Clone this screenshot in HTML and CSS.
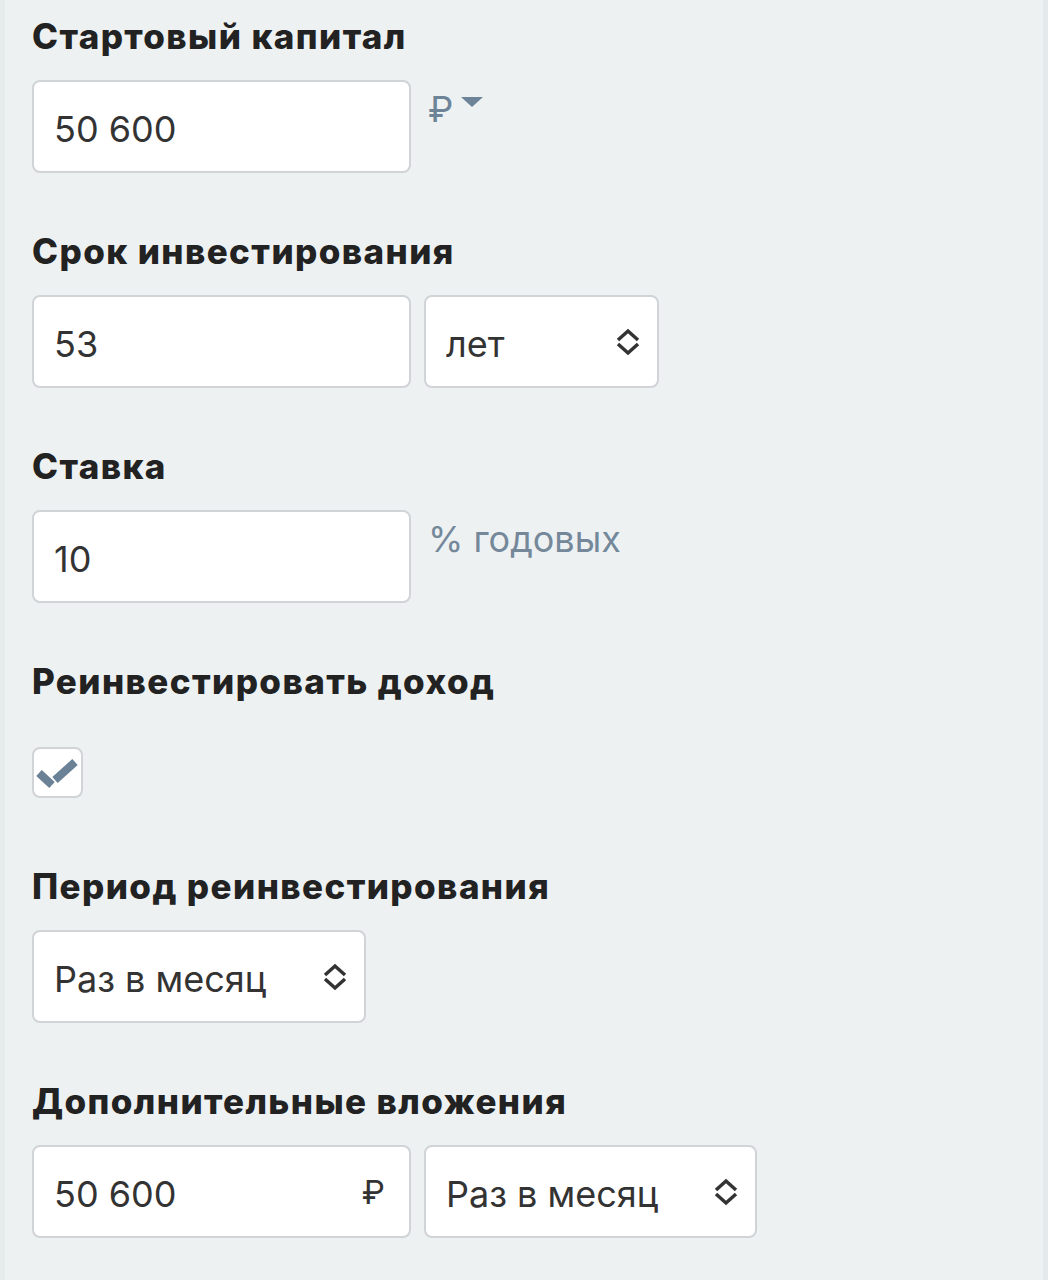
FILE: index.html
```html
<!DOCTYPE html>
<html lang="ru">
<head>
    <meta charset="UTF-8">
    <meta name="viewport" content="width=device-width, initial-scale=1.0">
    <title>Калькулятор инвестиций</title>
    <link rel="stylesheet" href="styles.css">
</head>
<body>
    <form class="calc">
        <div class="field">
            <label class="field-label" for="capital">Стартовый капитал</label>
            <div class="field-row">
                <input class="input" id="capital" type="text" value="50 600">
                <button class="addon addon-currency" type="button">₽<span class="caret"></span></button>
            </div>
        </div>

        <div class="field">
            <label class="field-label" for="term">Срок инвестирования</label>
            <div class="field-row">
                <input class="input" id="term" type="text" value="53">
                <div class="select-wrap select-term">
                    <select class="select">
                        <option>лет</option>
                        <option>месяцев</option>
                    </select>
                    <svg class="chevrons" viewBox="0 0 24 28" width="24" height="28"><path d="M2 12 L12 3 L22 12 M2 16 L12 25 L22 16"/></svg>
                </div>
            </div>
        </div>

        <div class="field">
            <label class="field-label" for="rate">Ставка</label>
            <div class="field-row">
                <input class="input" id="rate" type="text" value="10">
                <span class="addon">% годовых</span>
            </div>
        </div>

        <div class="field field-check">
            <div class="field-label">Реинвестировать доход</div>
            <label class="checkbox">
                <input type="checkbox" checked>
                <span class="checkbox-box">
                    <svg viewBox="0 0 51 51" width="51" height="51"><path d="M7 26 L20 38 M23 33 L43 15"/></svg>
                </span>
            </label>
        </div>

        <div class="field">
            <label class="field-label" for="period">Период реинвестирования</label>
            <div class="field-row">
                <div class="select-wrap select-period">
                    <select class="select" id="period">
                        <option>Раз в месяц</option>
                        <option>Раз в квартал</option>
                        <option>Раз в год</option>
                    </select>
                    <svg class="chevrons" viewBox="0 0 24 28" width="24" height="28"><path d="M2 12 L12 3 L22 12 M2 16 L12 25 L22 16"/></svg>
                </div>
            </div>
        </div>

        <div class="field">
            <label class="field-label" for="extra">Дополнительные вложения</label>
            <div class="field-row">
                <div class="input-wrap">
                    <input class="input" id="extra" type="text" value="50 600">
                    <span class="input-suffix">₽</span>
                </div>
                <div class="select-wrap select-extra">
                    <select class="select">
                        <option>Раз в месяц</option>
                        <option>Раз в квартал</option>
                        <option>Раз в год</option>
                    </select>
                    <svg class="chevrons" viewBox="0 0 24 28" width="24" height="28"><path d="M2 12 L12 3 L22 12 M2 16 L12 25 L22 16"/></svg>
                </div>
            </div>
        </div>
    </form>
</body>
</html>
```

FILE: styles.css
```css
* {
    margin: 0;
    padding: 0;
    box-sizing: border-box;
}

body {
    background: #edf1f2;
    color: #222;
    font-family: Inter, "Liberation Sans", sans-serif;
    min-height: 100vh;
    border-left: 5px solid #e6ecec;
    border-right: 5px solid #e4eaeb;
}

.calc {
    padding: 16px 0 0 27px;
}

.field {
    margin-bottom: 58px;
}

.field-label {
    display: block;
    font-size: 35px;
    line-height: 40px;
    font-weight: 800;
    letter-spacing: 1.4px;
    color: #222;
    margin-bottom: 24px;
}

.field-row {
    display: flex;
    align-items: flex-start;
    gap: 13px;
}

.input {
    width: 379px;
    height: 93px;
    padding: 4px 20px 0;
    border: 2px solid #d0d4d7;
    border-radius: 8px;
    background: #fff;
    font-family: Inter, "Liberation Sans", sans-serif;
    font-size: 36px;
    color: #333;
    outline: none;
}

.input-wrap {
    position: relative;
}

.input-wrap .input {
    padding-right: 60px;
}

.input-suffix {
    position: absolute;
    right: 26px;
    top: 50%;
    transform: translateY(-50%);
    font-size: 33px;
    color: #333;
}

.addon {
    padding-top: 7px;
    margin-left: 4px;
    font-size: 36px;
    line-height: 44px;
    color: #74889a;
    background: none;
    border: none;
    font-family: Inter, "Liberation Sans", sans-serif;
}

.addon-currency {
    display: flex;
    align-items: center;
    color: #6d8498;
    cursor: pointer;
}

.caret {
    display: inline-block;
    margin-left: 8px;
    margin-top: -14px;
    border-left: 11px solid transparent;
    border-right: 11px solid transparent;
    border-top: 10px solid #6d8498;
}

.select-wrap {
    position: relative;
}

.select {
    appearance: none;
    -webkit-appearance: none;
    width: 100%;
    height: 93px;
    padding: 4px 60px 0 20px;
    border: 2px solid #d0d4d7;
    border-radius: 8px;
    background: #fff;
    font-family: Inter, "Liberation Sans", sans-serif;
    font-size: 36px;
    color: #333;
    outline: none;
}

.select-term {
    width: 235px;
}

.select-period {
    width: 334px;
}

.select-extra {
    width: 333px;
}

.chevrons {
    position: absolute;
    right: 19px;
    top: 50%;
    transform: translateY(-50%);
    fill: none;
    stroke: #333;
    stroke-width: 3.5;
    pointer-events: none;
}

.field-check {
    margin-bottom: 64px;
}

.field-check .field-label {
    margin-bottom: 46px;
}

.checkbox {
    display: inline-block;
    cursor: pointer;
}

.checkbox input {
    display: none;
}

.checkbox-box {
    display: block;
    width: 51px;
    height: 51px;
    border: 2px solid #d0d4d7;
    border-radius: 8px;
    background: #fff;
}

.checkbox-box svg {
    display: block;
    margin: -2px;
    fill: none;
    stroke: #6a8196;
    stroke-width: 8;
}
```
